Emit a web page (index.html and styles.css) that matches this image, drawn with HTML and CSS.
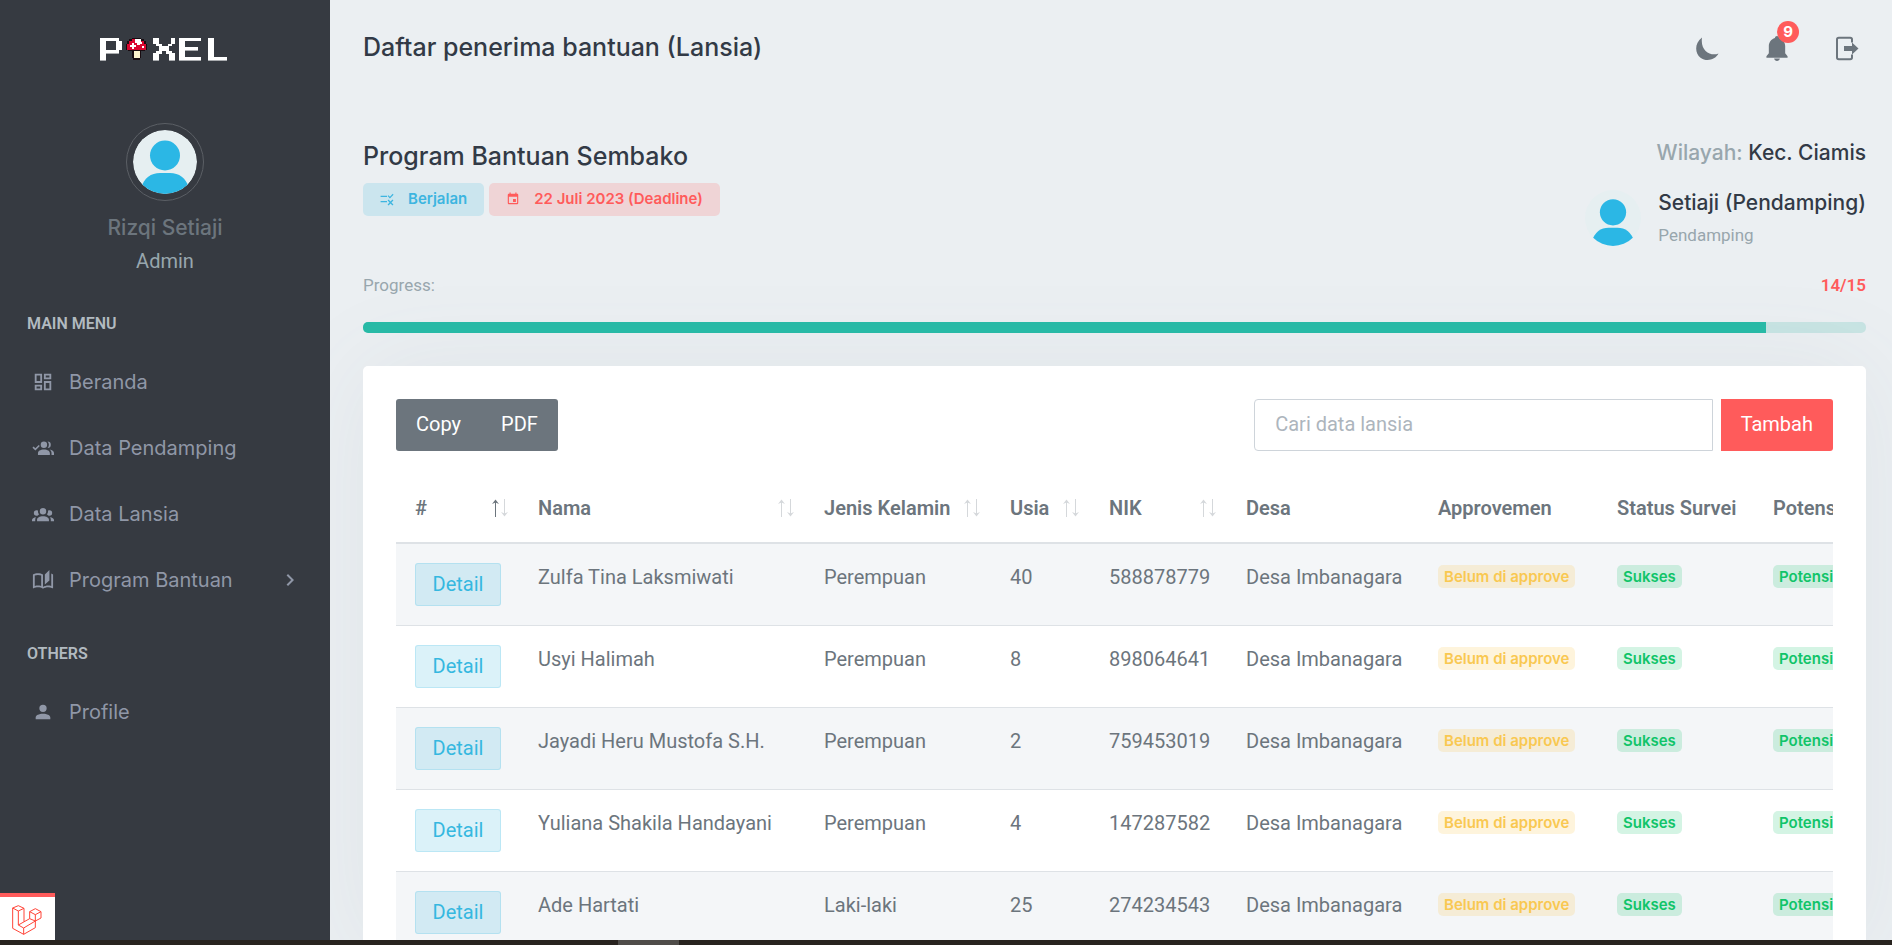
FILE: index.html
```html
<!DOCTYPE html>
<html lang="id">
<head>
<meta charset="utf-8">
<meta name="viewport" content="width=device-width, initial-scale=1">
<title>Daftar penerima bantuan (Lansia)</title>
<link rel="stylesheet" href="styles.css">
</head>
<body>
<svg class="sprite" aria-hidden="true">
  <symbol id="person" viewBox="0 0 64 64">
    <clipPath id="round"><circle cx="32" cy="32" r="32"/></clipPath>
    <g clip-path="url(#round)">
      <rect width="64" height="64" fill="#e6eff1"/>
      <circle cx="32" cy="25.500" r="15" fill="#2bb7e5"/>
      <path d="M8 58C11 48 18 43 27 43H37C46 43 53 48 56 58V64H8Z" fill="#2bb7e5"/>
    </g>
  </symbol>
  <symbol id="sort" viewBox="0 0 18 18">
    <path class="sort-up" d="M4.500 18V2"/>
    <path class="sort-up-tip" d="M1 5L4.500 .5L8 5L4.500 3.500Z"/>
    <path class="sort-down" d="M13.500 0V16"/>
    <path class="sort-down-tip" d="M10 13L13.500 17.500L17 13L13.500 14.500Z"/>
  </symbol>
</svg>
<div class="app">
  <aside class="sidebar">
    <a class="logo" href="#" aria-label="Pixel">
      <svg viewBox="0 0 128 23" width="130" height="23" preserveAspectRatio="xMinYMin" shape-rendering="crispEdges">
        <g fill="#a9abae">
          <path d="M0 20H6V23H0ZM16 13H19V16H6V14ZM53 21H59V23H53ZM69 21H75V23H69ZM79 20H101V23H79ZM85 11H98V13H85ZM108 20H127V23H108Z"/>
        </g>
        <g fill="#fff">
          <path d="M0 0H19V3H22V12H19V15H6V22H0ZM6 3V12H16V3Z" fill-rule="evenodd"/>
          <path d="M53 0H59V6H62V8H68V6H71V0H75V6H72V8H69V13H72V15H75V22H69V16H66V13H62V16H59V22H53V15H56V13H59V8H56V6H53Z"/>
          <path d="M79 0H101V3H85V9H98V12H85V19H101V22H79Z"/>
          <path d="M108 0H114V19H127V22H108Z"/>
        </g>
        <path d="M32 0H41V1H44V3H46V6H47V12H45V13H41V20H40V22H33V20H32V13H28V12H26V6H27V3H29V1H32Z" fill="#180b10"/>
        <path d="M32 1H41V3H44V6H46V12H27V6H29V3H32Z" fill="#d9062f"/>
        <path d="M35 1H41V4H42V6H40V7H37V5H35ZM32 5H34V7H36V9H34V11H32V9H30V7H32ZM42 8H44V10H42Z" fill="#fff"/>
        <path d="M34 13H40V20H34Z" fill="#fdf3cd"/>
      </svg>
    </a>
    <div class="profile">
      <svg class="profile-photo"><use href="#person"/></svg>
      <h5 class="profile-name">Rizqi Setiaji</h5>
      <p class="profile-role">Admin</p>
    </div>
    <nav class="menu">
      <h6 class="menu-title">MAIN MENU</h6>
      <a class="menu-link" href="#"><svg viewBox="0 0 24 24"><path d="M19,5V7H15V5H19M9,5V11H5V5H9M19,13V19H15V13H19M9,17V19H5V17H9M21,3H13V9H21V3M11,3H3V13H11V3M21,11H13V21H21V11M11,15H3V21H11V15Z"/></svg>Beranda</a>
      <a class="menu-link" href="#"><svg viewBox="0 0 24 24"><path d="M13 5A3.500 3.500 0 1 1 13 12A3.500 3.500 0 0 1 13 5M17 5A3.500 3.500 0 1 1 17 12A5 5 0 0 0 17 5M13 13.500C17 13.500 19.500 15.300 19.500 17.500V19.500H6.500V17.500C6.500 15.300 9 13.500 13 13.500M19.200 13.700C22 14.200 24 15.600 24 17.500V19.500H21.300V17.500C21.300 16 20.500 14.700 19.200 13.700M7.300 8.600L8.500 9.900L3.700 14.700L.5 11.700L1.700 10.400L3.700 12.200Z"/></svg>Data Pendamping</a>
      <a class="menu-link" href="#"><svg viewBox="0 0 24 24"><path d="M12,5.500A3.500,3.500 0 0,1 15.500,9A3.500,3.500 0 0,1 12,12.500A3.500,3.500 0 0,1 8.500,9A3.500,3.500 0 0,1 12,5.500M5,8C5.560,8 6.080,8.150 6.530,8.420C6.380,9.850 6.800,11.270 7.660,12.380C7.160,13.340 6.160,14 5,14A3,3 0 0,1 2,11A3,3 0 0,1 5,8M19,8A3,3 0 0,1 22,11A3,3 0 0,1 19,14C17.840,14 16.840,13.340 16.340,12.380C17.200,11.270 17.620,9.850 17.470,8.420C17.920,8.150 18.440,8 19,8M5.500,18.250C5.500,16.180 8.410,14.500 12,14.500C15.590,14.500 18.500,16.180 18.500,18.250V20H5.500V18.250M0,20V18.500C0,17.110 1.890,15.940 4.450,15.600C3.860,16.280 3.500,17.220 3.500,18.250V20H0M24,20H20.500V18.250C20.500,17.220 20.140,16.280 19.550,15.600C22.110,15.940 24,17.110 24,18.500V20Z"/></svg>Data Lansia</a>
      <a class="menu-link" href="#"><svg viewBox="0 0 24 24"><path d="M19 1L14 6V17L19 12.500V1M21 5V18.500C19.900 18.150 18.700 18 17.500 18C15.800 18 13.350 18.650 12 19.500V6C10.550 4.900 8.450 4.500 6.500 4.500C4.550 4.500 2.450 4.900 1 6V20.650C1 20.900 1.250 21.150 1.500 21.150C1.600 21.150 1.650 21.100 1.750 21.100C3.100 20.450 5.050 20 6.500 20C8.450 20 10.550 20.400 12 21.500C13.350 20.650 15.800 20 17.500 20C19.150 20 20.850 20.300 22.250 21.050C22.350 21.100 22.400 21.100 22.500 21.100C22.750 21.100 23 20.850 23 20.600V6C22.400 5.550 21.750 5.250 21 5M10 18.410C8.750 18.090 7.500 18 6.500 18C5.440 18 4.180 18.190 3 18.500V7.130C3.910 6.730 5.140 6.500 6.500 6.500C7.860 6.500 9.090 6.730 10 7.130V18.410Z"/></svg>Program Bantuan<svg class="chevron" viewBox="0 0 24 24"><path d="M8.590,16.580L13.170,12L8.590,7.410L10,6L16,12L10,18L8.590,16.580Z"/></svg></a>
      <h6 class="menu-title">OTHERS</h6>
      <a class="menu-link" href="#"><svg viewBox="0 0 24 24"><path d="M12,4A4,4 0 0,1 16,8A4,4 0 0,1 12,12A4,4 0 0,1 8,8A4,4 0 0,1 12,4M12,14C16.420,14 20,15.790 20,18V20H4V18C4,15.790 7.580,14 12,14Z"/></svg>Profile</a>
    </nav>
    <button class="debugbar" type="button" aria-label="Debugbar">
      <svg viewBox="0 0 90 90" width="30" height="30" fill="none" stroke="#ff4438" stroke-width="3" stroke-linejoin="round">
        <path d="M2 9L19 2L36 10L19 18ZM53 20L70 11L87 20L70 29ZM2 9V70L35 88L70 68V29M19 18V60L35 69V88M36 10V50M53 20V41L70 48L87 39V20M19 60L53 41M35 69L70 48"/>
      </svg>
    </button>
  </aside>

  <main class="page">
    <header class="topbar">
      <h1 class="title">Daftar penerima bantuan (Lansia)</h1>
      <div class="actions">
        <button class="action" type="button" aria-label="Mode gelap"><svg viewBox="0 0 24 24"><path d="M7 1C-1 7 0 17 5.500 21.200C11.500 25.500 20 23.500 23.500 17C16 20 5 15 7 1Z"/></svg></button>
        <button class="action" type="button" aria-label="Notifikasi"><svg viewBox="0 0 24 26"><path d="M12 0C13.200 0 14 .8 14.200 2C18 3.200 20.500 6.500 20.500 10.500V18L23 21V22.500H1V21L3.500 18V10.500C3.500 6.500 6 3.200 9.800 2C10 .8 10.800 0 12 0ZM9 23.500H15C14.700 25 13.500 26 12 26S9.300 25 9 23.500Z"/></svg><span class="count">9</span></button>
        <button class="action" type="button" aria-label="Keluar"><svg viewBox="0 0 24 24"><path d="M17 6V3Q17 1.200 15.200 1.200H3.800Q2 1.200 2 3V21Q2 22.800 3.800 22.800H15.200Q17 22.800 17 21V18" fill="none" stroke="#6c757d" stroke-width="2"/><path d="M9 9.500H17V6L23.500 12L17 18V14.500H9Z"/></svg></button>
      </div>
    </header>

    <section class="program">
      <div>
        <h2 class="title">Program Bantuan Sembako</h2>
        <div class="tags">
          <span class="tag tag-info"><svg viewBox="0 0 24 24"><path d="M1 6.500H12V8.500H1ZM1 15.500H12V17.500H1ZM17 11L13 7L14.500 5.500L17 8L21.800 3.200L23.200 4.700ZM14.600 13L18 16.400L21.400 13L23 14.600L19.600 18L23 21.400L21.400 23L18 19.600L14.600 23L13 21.400L16.400 18L13 14.600Z"/></svg>Berjalan</span>
          <span class="tag tag-danger"><svg viewBox="0 0 24 24"><path d="M19,19H5V8H19M16,1V3H8V1H6V3H5C3.890,3 3,3.890 3,5V19A2,2 0 0,0 5,21H19A2,2 0 0,0 21,19V5C21,3.890 20.100,3 19,3H18V1M17,12H12V17H17V12Z"/></svg>22 Juli 2023 (Deadline)</span>
        </div>
      </div>
      <div class="region">
        <p class="region-name"><span>Wilayah:</span> Kec. Ciamis</p>
        <div class="helper">
          <svg class="helper-photo"><use href="#person"/></svg>
          <div>
            <h3 class="helper-name">Setiaji (Pendamping)</h3>
            <p class="helper-role">Pendamping</p>
          </div>
        </div>
      </div>
    </section>

    <div class="progress-head"><span id="plabel">Progress:</span><strong>14/15</strong></div>
    <div class="bar" role="progressbar" aria-labelledby="plabel" aria-valuenow="14" aria-valuemin="0" aria-valuemax="15"><div class="bar-fill" style="width:93.33%"></div></div>

    <section class="card">
      <div class="toolbar">
        <div class="group"><button class="btn" type="button">Copy</button><button class="btn" type="button">PDF</button></div>
        <form class="search">
          <input class="search-input" type="text" placeholder="Cari data lansia" aria-label="Cari data lansia">
          <button class="btn btn-add" type="button">Tambah</button>
        </form>
      </div>
      <div class="table-wrap">
        <table class="table">
          <colgroup><col class="c-no"><col class="c-name"><col class="c-sex"><col class="c-age"><col class="c-nik"><col class="c-village"><col class="c-approve"><col class="c-survey"><col class="c-potential"></colgroup>
          <thead>
            <tr>
              <th><div class="head">#<svg class="sort asc"><use href="#sort"/></svg></div></th>
              <th><div class="head">Nama<svg class="sort"><use href="#sort"/></svg></div></th>
              <th><div class="head">Jenis Kelamin<svg class="sort"><use href="#sort"/></svg></div></th>
              <th><div class="head">Usia<svg class="sort"><use href="#sort"/></svg></div></th>
              <th><div class="head">NIK<svg class="sort"><use href="#sort"/></svg></div></th>
              <th>Desa</th><th>Approvemen</th><th>Status Survei</th><th>Potensi</th>
            </tr>
          </thead>
          <tbody>
            <tr><td><button class="detail" type="button">Detail</button></td><td>Zulfa Tina Laksmiwati</td><td>Perempuan</td><td>40</td><td>588878779</td><td>Desa Imbanagara</td><td><span class="badge warn">Belum di approve</span></td><td><span class="badge ok">Sukses</span></td><td><span class="badge ok">Potensi</span></td></tr>
            <tr><td><button class="detail" type="button">Detail</button></td><td>Usyi Halimah</td><td>Perempuan</td><td>8</td><td>898064641</td><td>Desa Imbanagara</td><td><span class="badge warn">Belum di approve</span></td><td><span class="badge ok">Sukses</span></td><td><span class="badge ok">Potensi</span></td></tr>
            <tr><td><button class="detail" type="button">Detail</button></td><td>Jayadi Heru Mustofa S.H.</td><td>Perempuan</td><td>2</td><td>759453019</td><td>Desa Imbanagara</td><td><span class="badge warn">Belum di approve</span></td><td><span class="badge ok">Sukses</span></td><td><span class="badge ok">Potensi</span></td></tr>
            <tr><td><button class="detail" type="button">Detail</button></td><td>Yuliana Shakila Handayani</td><td>Perempuan</td><td>4</td><td>147287582</td><td>Desa Imbanagara</td><td><span class="badge warn">Belum di approve</span></td><td><span class="badge ok">Sukses</span></td><td><span class="badge ok">Potensi</span></td></tr>
            <tr><td><button class="detail" type="button">Detail</button></td><td>Ade Hartati</td><td>Laki-laki</td><td>25</td><td>274234543</td><td>Desa Imbanagara</td><td><span class="badge warn">Belum di approve</span></td><td><span class="badge ok">Sukses</span></td><td><span class="badge ok">Potensi</span></td></tr>
          </tbody>
        </table>
      </div>
    </section>
  </main>
</div>
<div class="taskbar"><div class="taskbar-item"></div></div>
</body>
</html>
```
FILE: styles.css
```css
* { box-sizing: border-box; }
body {
  margin: 0;
  height: 100vh;
  display: flex;
  flex-direction: column;
  overflow: hidden;
  background: #ebeff2;
  color: #6c757d;
  font: 20px/30px Roboto, sans-serif;
}
h1, h2, h3, h5, h6, p { margin: 0; }
button { font: inherit; cursor: pointer; }
a { color: inherit; text-decoration: none; }
svg { display: block; flex: none; }
.sprite { position: absolute; width: 0; height: 0; }

.app { display: flex; flex: 1; min-height: 0; }

/* Sidebar */
.sidebar {
  position: relative;
  flex: none;
  width: 330px;
  background: #363a41;
}
.logo { display: flex; justify-content: center; padding-top: 38px; }
.profile { padding-top: 62px; text-align: center; }
.profile-photo {
  width: 78px;
  height: 78px;
  margin: 0 auto;
  padding: 6px;
  border: 1px solid #5b5f65;
  border-radius: 50%;
}
.profile-name { padding-top: 12px; font: 500 21px/30px Inter, sans-serif; }
.profile-role { padding-top: 3px; color: #98a6ad; }
.menu { padding-top: 33px; }
.menu-title {
  padding: 0 27px;
  color: #b2bac0;
  font: 600 16px/30px Roboto, sans-serif;
}
.menu-link + .menu-title { padding-top: 26px; }
.menu-title + .menu-link { margin-top: 10px; }
.menu-link {
  display: flex;
  align-items: center;
  height: 66px;
  padding: 0 28px 0 32px;
  gap: 15px;
  color: #9097a7;
  font-family: Inter, sans-serif;
}
.menu-link svg { width: 22px; height: 22px; fill: currentColor; }
.menu-link .chevron { width: 24px; height: 24px; margin-left: auto; }
.debugbar {
  position: absolute;
  left: 0;
  bottom: 0;
  width: 55px;
  height: 47px;
  padding: 2px 0 0 12px;
  border: 0;
  border-top: 4px solid #ff5b5b;
  background: #fff;
}

/* Page */
.page {
  display: flex;
  flex: 1;
  flex-direction: column;
  min-width: 0;
  padding: 0 26px 0 33px;
  overflow: hidden;
}
.title { color: #323a46; font: 500 25px/36px Inter, sans-serif; }
.topbar { display: flex; flex: none; justify-content: space-between; align-items: center; height: 94px; }
.actions { display: flex; gap: 46px; padding: 2px 7px 0 0; }
.action {
  position: relative;
  padding: 0;
  border: 0;
  background: none;
}
.action svg { width: 24px; height: 25px; fill: #6c757d; }
.count {
  position: absolute;
  top: -15px;
  right: -10px;
  width: 22px;
  height: 22px;
  border-radius: 50%;
  background: #ff5b5b;
  color: #fff;
  font: 700 15px/22px Inter, sans-serif;
}
.program { display: flex; justify-content: space-between; padding-top: 44px; }
.tags { display: flex; gap: 5px; padding-top: 9px; }
.tag {
  display: flex;
  align-items: center;
  gap: 14px;
  height: 33px;
  padding: 0 17px 2px;
  border-radius: 5px;
  font: 600 15px/20px Inter, sans-serif;
}
.tag svg { width: 14px; height: 14px; fill: currentColor; }
.tag-info { background: #cbe5ee; color: #3db5e0; }
.tag-danger { background: #efd4d6; color: #ff5b5b; }
.region-name { color: #323a46; text-align: right; font: 500 21px/30px Inter, sans-serif; }
.region-name span { color: #98a6ad; }
.helper { display: flex; align-items: center; gap: 17px; padding-top: 20px; }
.helper-photo { width: 56px; height: 56px; margin-bottom: 4px; }
.helper-name { color: #323a46; font: 500 21px/30px Inter, sans-serif; }
.helper-role { color: #98a6ad; font-size: 17px; line-height: 34px; }
.progress-head {
  display: flex;
  justify-content: space-between;
  padding-top: 18px;
  color: #98a6ad;
  font-size: 17px;
}
.progress-head strong { color: #ff5b5b; font-weight: 600; }
.bar { flex: none; height: 11px; margin-top: 22px; overflow: hidden; border-radius: 5px; background: #c8e4e3; }
.bar-fill { height: 100%; background: #28bba7; }

/* Table card */
.card {
  flex: 1 0 auto;
  margin-top: 33px;
  padding: 33px 33px 0;
  border-radius: 5px;
  background: #fff;
  box-shadow: 0 0 100px rgba(108, 120, 130, .08);
}
.toolbar { display: flex; justify-content: space-between; }
.group { display: flex; }
.btn {
  height: 52px;
  padding: 0 20px 2px;
  border: 0;
  background: #6c757d;
  color: #fff;
}
.group .btn:first-child { border-radius: 3px 0 0 3px; }
.group .btn:last-child { border-radius: 0 3px 3px 0; }
.search { display: flex; gap: 8px; width: calc(40% + 4px); }
.search-input {
  flex: 1;
  min-width: 0;
  height: 52px;
  padding: 0 20px 2px;
  border: 1px solid #ced4da;
  border-radius: 4px 0 0 4px;
  background: #fff;
  font: inherit;
}
.search-input::placeholder { color: #adb5bd; opacity: 1; }
.btn-add { border-radius: 0 3px 3px 0; background: #ff5b5b; }
.table-wrap { margin-top: 23px; overflow: hidden; }
.table { width: 1560px; table-layout: fixed; border-collapse: separate; border-spacing: 0; }
.c-no { width: 123px; }
.c-name { width: 286px; }
.c-sex { width: 186px; }
.c-age { width: 99px; }
.c-nik { width: 137px; }
.c-village { width: 192px; }
.c-approve { width: 179px; }
.c-survey { width: 156px; }
.table th, .table td { padding: 19px; text-align: left; vertical-align: top; white-space: nowrap; }
.table th { border-bottom: 2px solid #dee2e6; font-weight: 600; }
.table td { border-bottom: 1px solid #dee2e6; line-height: 28px; }
.table tbody tr:nth-child(odd) { background: #f4f6f8; }
.head { display: flex; align-items: center; justify-content: space-between; margin-right: -9px; }
.sort { --up: #d5d8db; width: 18px; height: 18px; }
.asc { --up: #6c757d; }
.sort-up { stroke: var(--up); }
.sort-up-tip { fill: var(--up); }
.sort-down { stroke: #d5d8db; }
.sort-down-tip { fill: #d5d8db; }
.detail {
  display: block;
  width: 86px;
  height: 43px;
  padding: 0 0 2px;
  border: 1px solid rgba(53, 184, 224, .2);
  border-radius: 3px;
  background: rgba(53, 184, 224, .18);
  color: #35b8e0;
}
.badge {
  display: block;
  width: max-content;
  margin-top: 2px;
  padding: 0 6px;
  border-radius: 5px;
  font: 600 15px/23px Inter, sans-serif;
}
.warn { background: rgba(249, 200, 81, .2); color: #f9c851; }
.ok { background: rgba(16, 196, 105, .18); color: #10c469; }

.taskbar { flex: none; height: 5px; padding-left: 618px; background: #28231f; }
.taskbar-item { width: 61px; height: 5px; background: #4f4c49; }
```
